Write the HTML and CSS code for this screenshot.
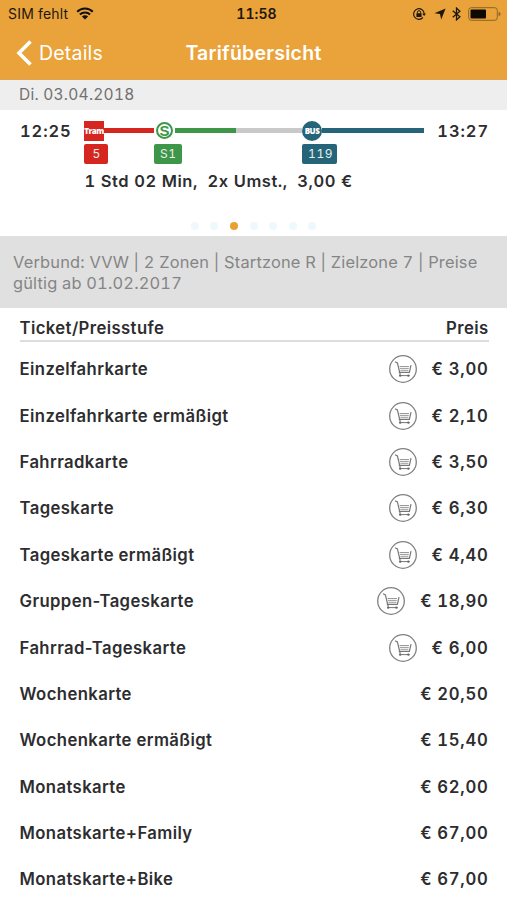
FILE: index.html
```html
<!DOCTYPE html>
<html lang="de">
<head>
    <meta charset="UTF-8">
    <meta name="viewport" content="width=device-width, initial-scale=1.0">
    <title>Tarifübersicht</title>
    <link rel="stylesheet" href="styles.css">
</head>
<body>
    <!-- Shared icons -->
    <svg class="sprite" width="0" height="0">
        <symbol id="cart" viewBox="0 0 28 28">
            <circle cx="14" cy="14" r="13.3" fill="#fff" stroke="#808080" stroke-width="1.3"/>
            <path d="M6 6.8l2.4 1.1 2.8 11.6M9.8 17.3h10.6l1.6-7.1" fill="none" stroke="#777" stroke-width="1.2"/>
            <path d="M10.6 11.5h9.4M11 13.4h8.8M11.4 15.3h8" fill="none" stroke="#9a9a9a" stroke-width="1"/>
            <path d="M10.5 20.6h10" fill="none" stroke="#777" stroke-width="1"/>
            <circle cx="11.2" cy="20.6" r="1.2" fill="#666"/>
            <circle cx="19.4" cy="20.6" r="1.2" fill="#666"/>
        </symbol>
    </svg>

    <!-- Header -->
    <header>
        <div class="status-bar">
            <div class="carrier">
                <span>SIM fehlt</span>
                <svg class="wifi" width="18" height="13" viewBox="0 0 18 13">
                    <path d="M1.2 4.7a11 11 0 0 1 15.6 0M3.9 7.5a7.2 7.2 0 0 1 10.2 0" fill="none" stroke="#111" stroke-width="2"/>
                    <path d="M9 12.6L5.9 9.5a4.4 4.4 0 0 1 6.2 0z" fill="#111"/>
                </svg>
            </div>
            <div class="clock">11:58</div>
            <div class="indicators">
                <svg width="14" height="14" viewBox="0 0 14 14">
                    <path d="M10.9 10.5A5.3 5.3 0 1 1 12.2 6.5" fill="none" stroke="#1d1710" stroke-width="1.2"/>
                    <path d="M10.2 6.4h3.8l-1.9 2.7z" fill="#1d1710"/>
                    <path d="M5.4 6.7V5.3a1.6 1.6 0 0 1 3.2 0v1.4" fill="none" stroke="#1d1710" stroke-width="1"/>
                    <rect x="4.4" y="6.3" width="5.2" height="3.7" rx=".5" fill="#1d1710"/>
                </svg>
                <svg class="location" width="12" height="12" viewBox="0 0 12 12">
                    <path d="M11.6.4L7.2 11.6 6 6 .4 5.2z" fill="#1d1710"/>
                </svg>
                <svg class="bluetooth" width="9" height="14" viewBox="0 0 9 14">
                    <path d="M.7 3.8l7.2 6-3.4 3.1V1.1l3.4 3.1-7.2 6" fill="none" stroke="#1d1710" stroke-width="1.3"/>
                </svg>
                <svg class="battery" width="33" height="14" viewBox="0 0 33 14">
                    <rect x=".7" y=".7" width="28.6" height="12.6" rx="2.6" fill="none" stroke="#8a632b" stroke-width="1"/>
                    <rect x="2.5" y="2.5" width="15.5" height="9" rx="1" fill="#0d0a05"/>
                    <path d="M30.6 4.8q2 .7 2 2.2t-2 2.2z" fill="#8a632b"/>
                </svg>
            </div>
        </div>
        <nav>
            <a class="back" href="#">
                <svg width="17" height="26" viewBox="0 0 17 26">
                    <path d="M15.5 1.5L4 13l11.5 11.5" fill="none" stroke="#fff" stroke-width="3.6"/>
                </svg>
                <span>Details</span>
            </a>
            <h1>Tarifübersicht</h1>
        </nav>
    </header>

    <div class="date">Di. 03.04.2018</div>

    <!-- Trip overview -->
    <section class="trip">
        <div class="trip-row">
            <span class="time">12:25</span>
            <div class="legs">
                <div class="leg tram">
                    <div class="track"><span class="stop">Tram</span></div>
                    <span class="line-badge">5</span>
                </div>
                <div class="leg sbahn">
                    <div class="track"><span class="stop">S</span></div>
                    <span class="line-badge">S1</span>
                </div>
                <div class="leg bus">
                    <div class="track"><span class="stop">BUS</span></div>
                    <span class="line-badge">119</span>
                </div>
            </div>
            <span class="time end">13:27</span>
        </div>
        <p class="summary"><span>1 Std 02 Min,</span><span>2x Umst.,</span><span>3,00 €</span></p>
        <div class="pager">
            <i></i><i></i><i class="active"></i><i></i><i></i><i></i><i></i>
        </div>
    </section>

    <div class="zone-info">Verbund: VVW | 2 Zonen | Startzone R | Zielzone 7 | Preise gültig ab 01.02.2017</div>

    <!-- Ticket list -->
    <main>
        <div class="list-head"><span>Ticket/Preisstufe</span><span>Preis</span></div>
        <ul class="tickets">
            <li><span class="name">Einzelfahrkarte</span><svg class="cart"><use href="#cart"/></svg><span class="price">€ 3,00</span></li>
            <li><span class="name">Einzelfahrkarte ermäßigt</span><svg class="cart"><use href="#cart"/></svg><span class="price">€ 2,10</span></li>
            <li><span class="name">Fahrradkarte</span><svg class="cart"><use href="#cart"/></svg><span class="price">€ 3,50</span></li>
            <li><span class="name">Tageskarte</span><svg class="cart"><use href="#cart"/></svg><span class="price">€ 6,30</span></li>
            <li><span class="name">Tageskarte ermäßigt</span><svg class="cart"><use href="#cart"/></svg><span class="price">€ 4,40</span></li>
            <li><span class="name">Gruppen-Tageskarte</span><svg class="cart"><use href="#cart"/></svg><span class="price wide">€ 18,90</span></li>
            <li><span class="name">Fahrrad-Tageskarte</span><svg class="cart"><use href="#cart"/></svg><span class="price">€ 6,00</span></li>
            <li><span class="name">Wochenkarte</span><span class="price wide">€ 20,50</span></li>
            <li><span class="name">Wochenkarte ermäßigt</span><span class="price wide">€ 15,40</span></li>
            <li><span class="name">Monatskarte</span><span class="price wide">€ 62,00</span></li>
            <li><span class="name">Monatskarte+Family</span><span class="price wide">€ 67,00</span></li>
            <li><span class="name">Monatskarte+Bike</span><span class="price wide">€ 67,00</span></li>
        </ul>
    </main>
</body>
</html>
```
FILE: styles.css
```css
* {
    box-sizing: border-box;
    margin: 0;
    padding: 0;
}
body {
    height: 900px;
    overflow: hidden;
    font-family: 'Inter', 'Liberation Sans', sans-serif;
    font-size: 16px;
    font-variant-numeric: tabular-nums;
    background: #fff;
    color: #2d2d2f;
}
svg {
    display: block;
    flex-shrink: 0;
}
.sprite {
    display: none;
}

/* Header */
header {
    height: 80px;
    background: #eaa33b;
    border-bottom: 1px solid #dda257;
}
.status-bar {
    display: grid;
    grid-template-columns: 1fr auto 1fr;
    align-items: center;
    height: 27px;
    padding: 0 6px 0 8px;
    color: #1d1710;
    font-size: 14px;
}
.carrier,
.indicators {
    display: flex;
    align-items: center;
}
.carrier {
    gap: 8px;
    letter-spacing: 0.2px;
}
.clock {
    padding-left: 4px;
    font-weight: 600;
    letter-spacing: 0.1px;
}
.indicators {
    justify-content: flex-end;
}
.location {
    margin-left: 8px;
}
.bluetooth {
    margin-left: 6px;
}
.battery {
    margin-left: 7px;
}
nav {
    display: grid;
    grid-template-columns: 1fr auto 1fr;
    align-items: center;
    height: 51px;
    padding: 0 15px;
    color: #fff;
}
.back {
    display: flex;
    align-items: center;
    gap: 7px;
    color: #fff;
    font-size: 19.5px;
    letter-spacing: 0.2px;
    text-decoration: none;
}
h1 {
    font-size: 19.5px;
    font-weight: 600;
    letter-spacing: 0.25px;
}

.date {
    height: 30px;
    padding-left: 19px;
    background: #eee;
    color: #717171;
    font-size: 15.5px;
    line-height: 29px;
    letter-spacing: 0.25px;
}

/* Trip overview */
.trip {
    height: 126px;
    padding-top: 10px;
}
.trip-row {
    display: flex;
    padding: 0 18px 0 20px;
}
.time {
    width: 64px;
    font-size: 16.5px;
    font-weight: 600;
    line-height: 22px;
    letter-spacing: 0.9px;
}
.time.end {
    width: 65px;
    text-align: right;
}
.legs {
    display: grid;
    grid-template-columns: 70px 148px 122px;
    width: 340px;
}
.leg {
    display: flex;
    flex-direction: column;
    align-items: flex-start;
    gap: 3px;
}
.track {
    display: flex;
    align-items: center;
    width: 100%;
    height: 21px;
}
.track::after {
    content: '';
    flex: 1;
    height: 5px;
}
.stop {
    display: flex;
    align-items: center;
    justify-content: center;
    width: 20px;
    height: 20px;
    color: #fff;
    font-family: 'Open Sans', 'Noto Sans', sans-serif;
    font-size: 8px;
    font-weight: 800;
    letter-spacing: -0.5px;
}
.line-badge {
    height: 20px;
    padding: 0 4px 0 6px;
    border-radius: 2px;
    color: #e8f0ea;
    font-size: 12px;
    line-height: 20px;
    letter-spacing: 0.6px;
}
.tram .stop,
.tram .track::after,
.tram .line-badge {
    background: #d5261f;
}
.tram .line-badge {
    padding: 0 7.5px 0 8.5px;
}
.sbahn .stop {
    width: 17px;
    height: 17px;
    margin: 0 2px 0 2px;
    border: 2px solid #3e9648;
    border-radius: 50%;
    color: #3e9648;
    font-family: 'Liberation Sans', sans-serif;
    font-size: 15px;
    font-weight: 700;
    line-height: 13px;
    letter-spacing: 0;
}
.sbahn .track::after {
    background: linear-gradient(to right, #3e9648 61px, #c9c9c9 61px);
}
.sbahn .line-badge {
    padding-right: 5px;
    background: #3e9648;
}
.bus .stop {
    border-radius: 50%;
}
.bus .stop,
.bus .track::after,
.bus .line-badge {
    background: #266579;
}
.summary {
    display: flex;
    gap: 9.5px;
    height: 36px;
    padding-left: 84.5px;
    font-size: 16.5px;
    font-weight: 600;
    line-height: 34px;
    letter-spacing: 0.57px;
}
.pager {
    display: flex;
    justify-content: center;
    gap: 11.6px;
    margin-top: 18px;
    height: 16px;
    align-items: center;
}
.pager i {
    width: 8px;
    height: 8px;
    border-radius: 50%;
    background: #eef9fd;
}
.pager .active {
    background: #e9a033;
}

.zone-info {
    height: 72px;
    padding: 16px 13px;
    background: #e0e0e0;
    color: #858585;
    font-size: 16.4px;
    line-height: 21px;
    letter-spacing: 0.19px;
}

/* Ticket list */
main {
    padding: 0 18.5px 0 19.5px;
    font-size: 16.7px;
    font-variant-numeric: normal;
    font-weight: 600;
    letter-spacing: 0.4px;
}
.list-head {
    display: flex;
    justify-content: space-between;
    height: 34px;
    padding-top: 4px;
    border-bottom: 2px solid #ddd;
    line-height: 32px;
}
.tickets {
    padding-top: 4px;
    list-style: none;
}
.tickets li {
    display: flex;
    align-items: center;
    height: 46.4px;
}
.name {
    flex: 1;
}
.cart {
    width: 28px;
    height: 28px;
}
.price {
    width: 72px;
    font-variant-numeric: tabular-nums;
    text-align: right;
    letter-spacing: 0.7px;
}
.price.wide {
    width: 84px;
}
```
